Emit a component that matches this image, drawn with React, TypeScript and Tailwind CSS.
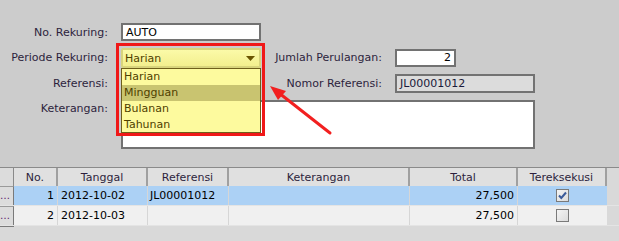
import React from "react";

const labelCls = "text-[#2d1f3d] text-right whitespace-nowrap";

function Check({ checked }: { checked: boolean }) {
  return (
    <div className="w-[13px] h-[13px] border border-[#7a7a7a] bg-gradient-to-br from-[#f4f4f4] to-[#dcdcdc] flex items-center justify-center">
      {checked && (
        <svg width="11" height="11" viewBox="0 0 11 11">
          <path d="M2 5.5 L4.3 8 L9 2.5" stroke="#3b5b9a" strokeWidth="2" fill="none" />
        </svg>
      )}
    </div>
  );
}

export default function App() {
  const cols = [
    { name: "No.", w: 44 },
    { name: "Tanggal", w: 90 },
    { name: "Referensi", w: 81 },
    { name: "Keterangan", w: 181 },
    { name: "Total", w: 108 },
    { name: "Tereksekusi", w: 89 },
  ];
  const rows = [
    { no: "1", tgl: "2012-10-02", ref: "JL00001012", total: "27,500", chk: true, sel: true },
    { no: "2", tgl: "2012-10-03", ref: "", total: "27,500", chk: false, sel: false },
  ];
  return (
    <div className="relative w-[619px] h-[241px] overflow-hidden bg-[#cccccc] text-[11px] leading-none font-['DejaVu_Sans',sans-serif] flex flex-col">
      {/* form */}
      <div className="h-[167px] pt-[23px] flex flex-col">
        <div className="flex items-center h-[18px]">
          <div className={`${labelCls} w-[108px]`}>No. Rekuring:</div>
          <div className="ml-[13px] w-[140px] h-[18px] border-2 border-[#727272] bg-white flex items-center pl-[3px] text-black">AUTO</div>
        </div>
        <div className="flex items-center h-[19px] mt-[7px]">
          <div className={`${labelCls} w-[108px]`}>Periode Rekuring:</div>
          <div className="ml-[13px] w-[140px] h-[19px]" />
          <div className={`${labelCls} ml-[12px] w-[109px]`}>Jumlah Perulangan:</div>
          <div className="ml-[13px] w-[61px] h-[18px] border-2 border-[#727272] bg-white flex items-center justify-end pr-[3px] text-black">2</div>
        </div>
        <div className="flex items-center h-[19px] mt-[7px]">
          <div className={`${labelCls} w-[108px]`}>Referensi:</div>
          <div className="ml-[13px] w-[140px] h-[19px] border-2 border-[#727272] bg-white" />
          <div className={`${labelCls} ml-[12px] w-[109px]`}>Nomor Referensi:</div>
          <div className="ml-[13px] w-[140px] h-[19px] border-2 border-[#727272] bg-[#dcdcdc] flex items-center pl-[3px] text-[#1a1a3a]">JL00001012</div>
        </div>
        <div className="flex items-start mt-[7px]">
          <div className={`${labelCls} w-[108px] pt-[3px]`}>Keterangan:</div>
          <div className="ml-[13px] w-[414px] h-[49px] border-2 border-[#727272] bg-white" />
        </div>
      </div>

      {/* table */}
      <div className="flex-1 bg-[#d9d9d9] border-t border-[#8a8a8a]">
        <div className="flex h-[18px]">
          <div className="w-[14px] h-full bg-[#dcdcdc] border-r border-[#8a8a8a]" />
          {cols.map((c) => (
            <div
              key={c.name}
              style={{ width: c.w }}
              className="h-full bg-[#e0e0e0] border-r-2 border-[#a0a0a0] flex items-center justify-center text-[#2d1f3d]"
            >
              {c.name}
            </div>
          ))}
        </div>
        {rows.map((r) => (
          <div key={r.no} className="flex h-[20px] border-b border-[#e4e4e4]">
            <div className="w-[14px] h-full bg-[#dcdcdc] border-r border-[#7a7a7a] border-t border-t-[#9a9a9a] flex items-center text-[#5a1a6a] text-[10px] pl-[0px]">…</div>
            <div className={`flex h-full ${r.sel ? "bg-[#acd1f5]" : "bg-[#f0f0f0]"}`}>
              <div style={{ width: cols[0].w }} className="h-full border-r border-[#d6d6d6] flex items-center justify-end pr-[3px] text-black">{r.no}</div>
              <div style={{ width: cols[1].w }} className="h-full border-r border-[#d6d6d6] flex items-center pl-[3px] text-black">{r.tgl}</div>
              <div style={{ width: cols[2].w }} className="h-full border-r border-[#d6d6d6] flex items-center pl-[2px] text-black">{r.ref}</div>
              <div style={{ width: cols[3].w }} className="h-full border-r border-[#d6d6d6]" />
              <div style={{ width: cols[4].w }} className="h-full border-r border-[#d6d6d6] flex items-center justify-end pr-[3px] text-black">{r.total}</div>
              <div style={{ width: cols[5].w }} className="h-full flex items-center justify-center">
                <Check checked={r.chk} />
              </div>
            </div>
          </div>
        ))}
        <div className="w-[14px] h-[1px] bg-[#7a7a7a]" />
      </div>

      {/* combo + popup overlay */}
      <div className="absolute left-[116px] top-[43px] w-[149px] h-[93px] border-[3px] border-[#f01818]" />
      <div className="absolute left-[121px] top-[48px] w-[140px] h-[20px] rounded-[2px] border-2 border-[#d8d47c] bg-gradient-to-b from-[#fbfaa8] to-[#f3ef8e] flex items-center pl-[2px] pr-[4px] justify-between text-[#4f3f00]">
        <span>Harian</span>
        <svg width="9" height="5" viewBox="0 0 9 5">
          <path d="M0 0 H9 L4.5 5 Z" fill="#6a5400" />
        </svg>
      </div>
      <div className="absolute left-[121px] top-[68px] w-[140px] h-[65px] border border-[#6e5e1a] bg-[#fdfa9e] flex flex-col text-[#4f3f00]">
        <div className="h-[16px] flex items-center pl-[2px]">Harian</div>
        <div className="h-[16px] flex items-center pl-[2px] bg-[#c9c470]">Mingguan</div>
        <div className="h-[16px] flex items-center pl-[2px]">Bulanan</div>
        <div className="h-[16px] flex items-center pl-[2px]">Tahunan</div>
      </div>

      {/* arrow */}
      <svg className="absolute left-0 top-0 pointer-events-none" width="619" height="241">
        <line x1="330" y1="133" x2="279" y2="93" stroke="#f22020" strokeWidth="3" strokeLinecap="round" />
        <path d="M270 86 L286 91 L278 100 Z" fill="#f22020" />
      </svg>
    </div>
  );
}
